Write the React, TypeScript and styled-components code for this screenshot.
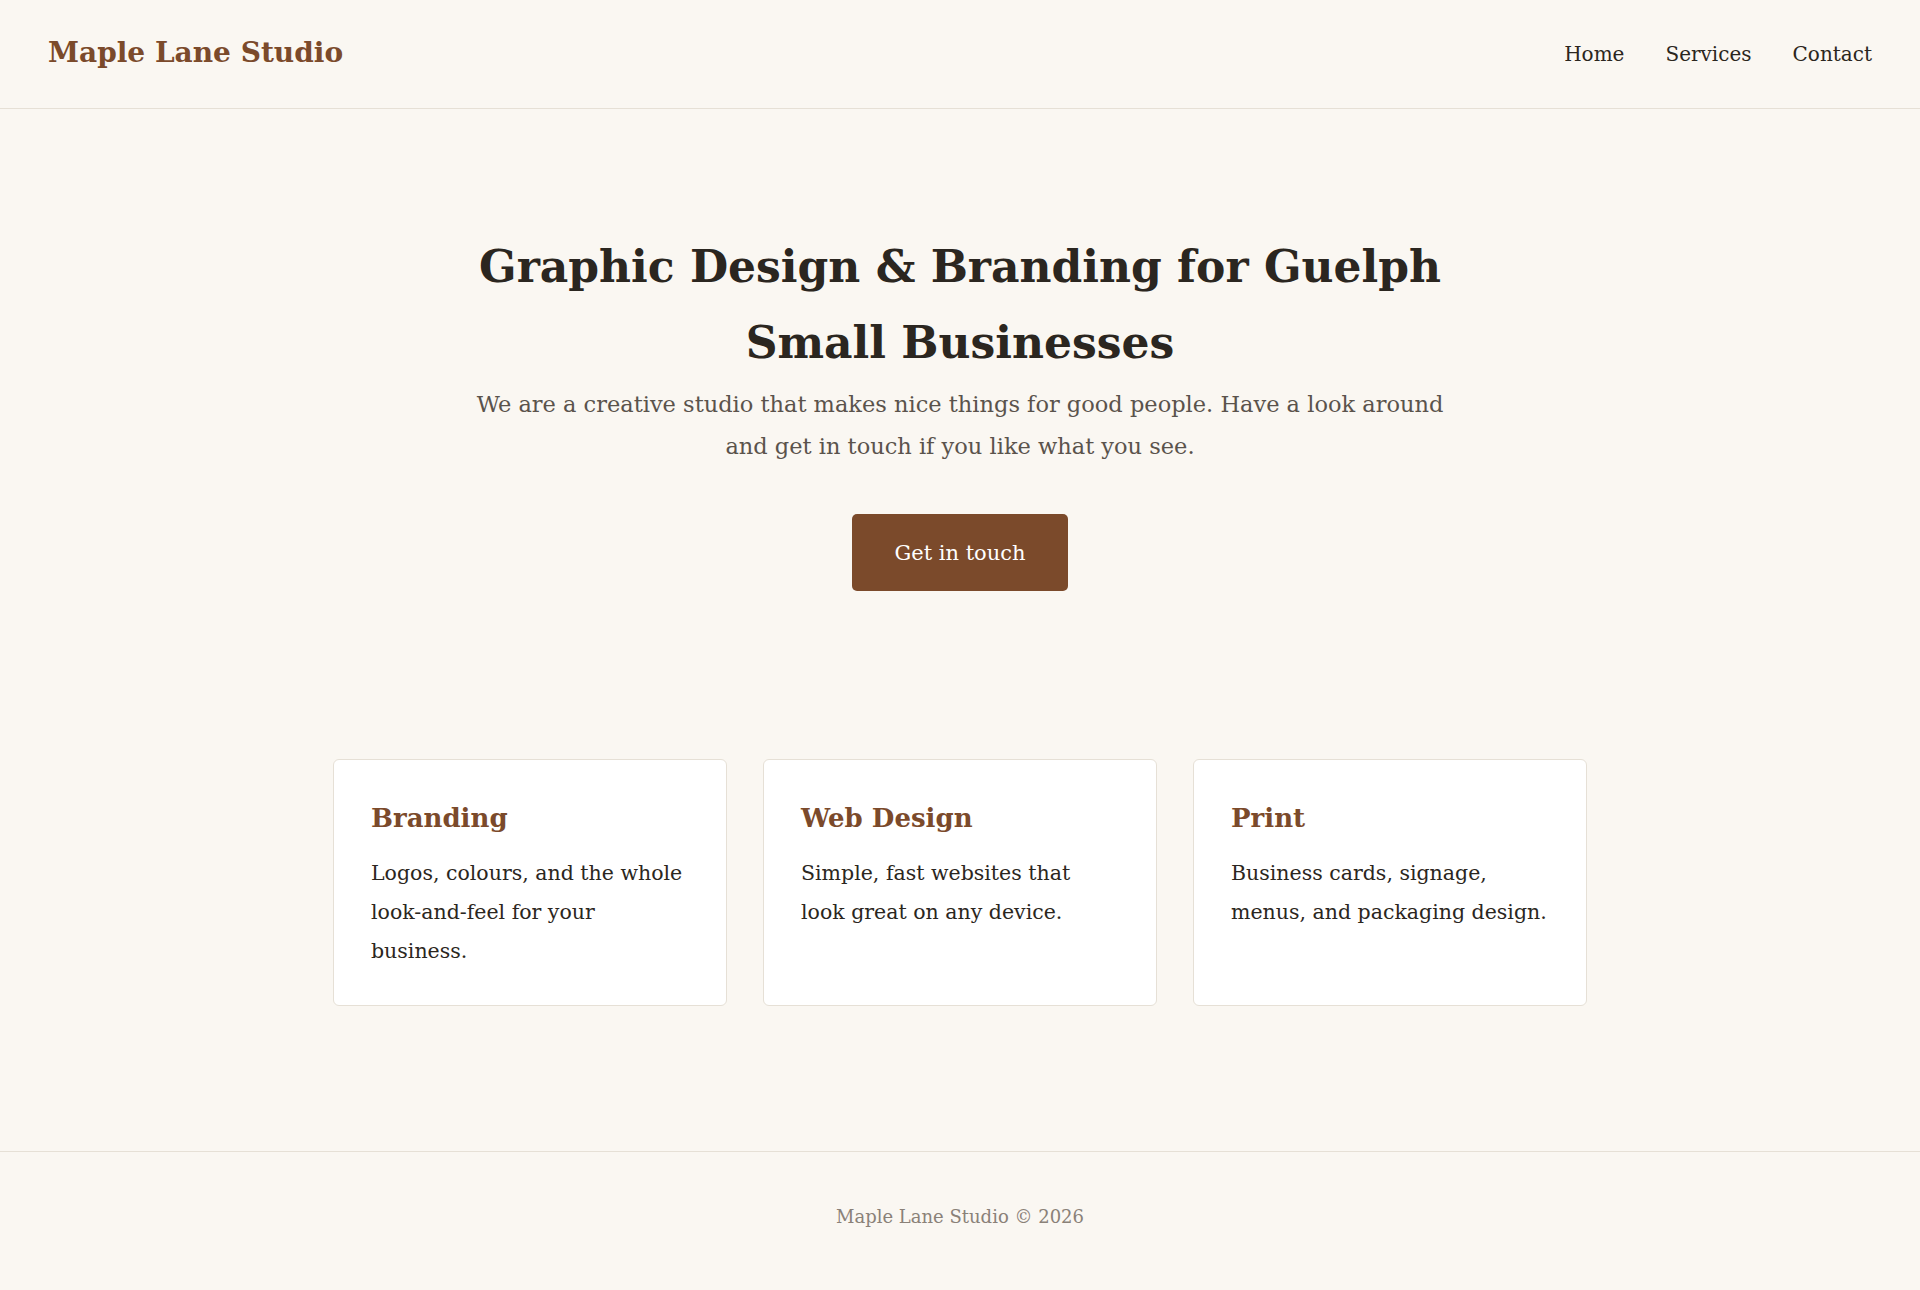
import React from 'react';
import styled, { createGlobalStyle } from 'styled-components';

const GlobalStyle = createGlobalStyle`
  html, body {
    margin: 0;
    padding: 0;
    background: #faf7f2;
  }
  body {
    font-family: 'DejaVu Serif', Georgia, serif;
    color: #2b2620;
  }
  * {
    box-sizing: border-box;
  }
`;

const Page = styled.div`
  min-height: 1290px;
  display: flex;
  flex-direction: column;
  background: #faf7f2;
`;

const Header = styled.header`
  height: 109px;
  padding: 0 48px;
  display: flex;
  align-items: center;
  justify-content: space-between;
  border-bottom: 1px solid #e6e0d6;
`;

const Logo = styled.a`
  font-size: 28px;
  font-weight: 700;
  color: #7b4a2b;
  text-decoration: none;
  margin-top: -3px;
`;

const Nav = styled.nav`
  display: flex;
  gap: 41px;
`;

const NavLink = styled.a`
  font-size: 20px;
  color: #2b2620;
  text-decoration: none;
`;

const Hero = styled.section`
  padding: 120px 24px 0;
  display: flex;
  flex-direction: column;
  align-items: center;
  text-align: center;
`;

const Title = styled.h1`
  max-width: 1000px;
  margin: 0;
  font-size: 44px;
  line-height: 76px;
  font-weight: 700;
  color: #2b2620;
`;

const Lead = styled.p`
  max-width: 1000px;
  margin: 2px 0 0;
  font-size: 22.5px;
  line-height: 42px;
  color: #5a534c;
`;

const CtaButton = styled.a`
  margin-top: 47px;
  width: 216px;
  height: 77px;
  display: flex;
  align-items: center;
  justify-content: center;
  background: #7b4a2b;
  color: #ffffff;
  border-radius: 5px;
  font-size: 21px;
  text-decoration: none;
`;

const Services = styled.section`
  padding: 168px 24px 145px;
  display: flex;
  justify-content: center;
`;

const CardGrid = styled.div`
  display: grid;
  grid-template-columns: repeat(3, 394px);
  gap: 36px;
`;

const Card = styled.article`
  height: 247px;
  padding: 37px 30px 0 37px;
  background: #ffffff;
  border: 1px solid #e6e0d6;
  border-radius: 6px;
`;

const CardTitle = styled.h2`
  margin: 0 0 15px;
  font-size: 26px;
  line-height: 42px;
  font-weight: 700;
  color: #7b4a2b;
`;

const CardText = styled.p`
  margin: 0;
  max-width: 318px;
  font-size: 20.5px;
  line-height: 39px;
  color: #2b2620;
`;

const Footer = styled.footer`
  flex: 1;
  border-top: 1px solid #e6e0d6;
  padding-top: 50px;
  text-align: center;
  font-size: 18px;
  line-height: 30px;
  color: #8a8178;
`;

const services = [
  { title: 'Branding', text: 'Logos, colours, and the whole look-and-feel for your business.' },
  { title: 'Web Design', text: 'Simple, fast websites that look great on any device.' },
  { title: 'Print', text: 'Business cards, signage, menus, and packaging design.' },
];

export default function App() {
  return (
    <Page>
      <GlobalStyle />
      <Header>
        <Logo href="#">Maple Lane Studio</Logo>
        <Nav>
          <NavLink href="#">Home</NavLink>
          <NavLink href="#">Services</NavLink>
          <NavLink href="#">Contact</NavLink>
        </Nav>
      </Header>
      <Hero>
        <Title>Graphic Design &amp; Branding for Guelph Small Businesses</Title>
        <Lead>
          We are a creative studio that makes nice things for good people. Have a look around
          and get in touch if you like what you see.
        </Lead>
        <CtaButton href="#">Get in touch</CtaButton>
      </Hero>
      <Services>
        <CardGrid>
          {services.map((s) => (
            <Card key={s.title}>
              <CardTitle>{s.title}</CardTitle>
              <CardText>{s.text}</CardText>
            </Card>
          ))}
        </CardGrid>
      </Services>
      <Footer>Maple Lane Studio © 2026</Footer>
    </Page>
  );
}
